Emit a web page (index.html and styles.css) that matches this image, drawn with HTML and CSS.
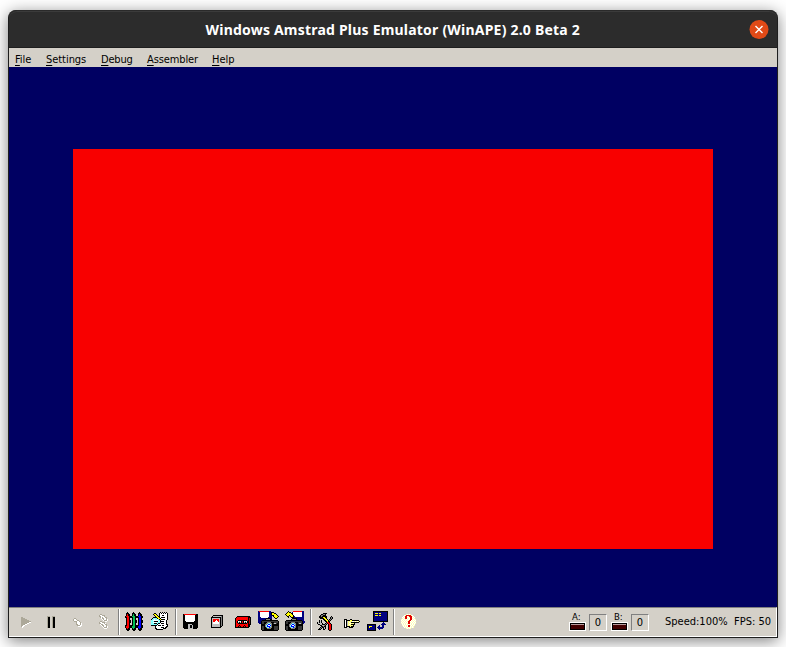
FILE: index.html
```html
<!DOCTYPE html>
<html lang="en">
<head>
<meta charset="utf-8">
<title>Windows Amstrad Plus Emulator (WinAPE) 2.0 Beta 2</title>
<link rel="stylesheet" href="styles.css">
</head>
<body>
<main class="window">
  <header class="titlebar">
    <h1 class="title">Windows Amstrad Plus Emulator (WinAPE) 2.0 Beta 2</h1>
    <button class="close" aria-label="Close"><svg width="19" height="19" viewBox="0 0 19 19"><path d="M6 6l7 7M13 6l-7 7" stroke="#fff" stroke-width="1.4"/></svg></button>
  </header>
  <nav class="menu">
    <span class="item file"><u>F</u>ile</span>
    <span class="item settings"><u>S</u>ettings</span>
    <span class="item debug"><u>D</u>ebug</span>
    <span class="item assembler"><u>A</u>ssembler</span>
    <span class="item help"><u>H</u>elp</span>
  </nav>
  <section class="screen"><div class="paper"></div></section>
  <footer class="toolbar">
    <div class="group">
      <svg class="tool" data-icon="play"></svg><svg class="tool" data-icon="pause"></svg><svg class="tool" data-icon="step"></svg><svg class="tool" data-icon="steps"></svg>
    </div>
    <div class="group">
      <svg class="tool" data-icon="pens"></svg><svg class="tool" data-icon="notes"></svg>
    </div>
    <div class="group">
      <svg class="tool" data-icon="disk"></svg><svg class="tool" data-icon="cart"></svg><svg class="tool" data-icon="tape"></svg><svg class="tool" data-icon="save"></svg><svg class="tool" data-icon="load"></svg>
    </div>
    <div class="group">
      <svg class="tool" data-icon="tools"></svg><svg class="tool" data-icon="hand"></svg><svg class="tool" data-icon="net"></svg>
    </div>
    <div class="group last">
      <svg class="tool" data-icon="help"></svg>
    </div>
    <div class="status">
      <div class="drive"><span class="letter">A:</span><span class="led"></span></div><span class="track">0</span>
      <div class="drive"><span class="letter">B:</span><span class="led"></span></div><span class="track">0</span>
      <span class="speed">Speed:100%</span><span class="fps">FPS: 50</span>
    </div>
  </footer>
</main>
<script src="icons.js"></script>
</body>
</html>
```
FILE: styles.css
```css
*, ::after { box-sizing: border-box; }
body {
  margin: 0;
  width: 786px;
  height: 647px;
  padding: 10px 8px 9px;
  background: #fff;
  overflow: hidden;
  font-family: "DejaVu Sans Condensed", "DejaVu Sans", sans-serif;
  font-size: 11px;
  color: #000;
}
.window {
  width: 770px;
  height: 628px;
  display: flex;
  flex-direction: column;
  border: 1px solid #1e1e1e;
  border-top: 0;
  border-radius: 8px 8px 0 0;
  background: #2c2c2c;
  box-shadow: 0 3px 16px rgba(0, 0, 0, .5);
}
.titlebar {
  height: 38px;
  display: grid;
  grid-template-columns: 1fr auto 1fr;
  align-items: center;
  border-radius: 8px 8px 0 0;
  background: #2c2c2c;
  border-top: 1px solid #2a2a2a;
  border-bottom: 1px solid #1e1e1e;
  box-shadow: inset 0 1px #3b3b3b;
}
.title {
  grid-column: 2;
  margin: 2px 0 0;
  width: 375px;
  font: bold 14px/18px "Noto Sans", "Open Sans", sans-serif;
  letter-spacing: .21px;
  color: #fff;
  white-space: nowrap;
}
.close {
  justify-self: end;
  width: 19px;
  height: 19px;
  margin: 0 9px 0 0;
  padding: 0;
  border: 0;
  border-radius: 50%;
  background: #e14a17;
  transform: translateX(.5px);
}
.close svg { display: block; }
.menu {
  height: 19px;
  display: flex;
  background: #d4d0c8;
  line-height: 24px;
  padding-left: 6px;
}
.item { letter-spacing: -.05px; }
.item u { text-underline-offset: 2px; text-decoration-thickness: 1px; }
.file { width: 31px; }
.settings { width: 55px; }
.debug { width: 46px; letter-spacing: -.2px; }
.assembler { width: 65px; letter-spacing: -.12px; }
.screen {
  height: 540px;
  padding: 82px 64px 58px;
  background: #000062;
}
.paper { height: 400px; background: #f80000; }
.toolbar {
  height: 30px;
  display: flex;
  align-items: center;
  padding-left: 3px;
  background: #d4d0c8;
  border-top: 1px solid #808080;
  border-right: 1px solid #fff;
  border-bottom: 1px solid #fff;
}
.group {
  display: flex;
  flex: none;
  height: 26px;
  padding: 1px 0;
}
.group:not(.last)::after {
  content: "";
  width: 2px;
  margin: -1px 0 -1px 3px;
  border-left: 1px solid #808080;
  border-right: 1px solid #fff;
}
.group:first-child::after { margin-left: 2px; }
.tool { width: 26px; height: 24px; overflow: visible; }
.status { display: flex; align-items: flex-start; margin-left: auto; height: 28px; }
.drive { width: 17px; margin: 2px -1px 0 1px; }
.letter { display: block; height: 12px; padding-left: 3px; font-size: 9.5px; line-height: 13px; }
.led {
  display: block;
  width: 17px;
  height: 9px;
  background: #420000;
  box-shadow: inset 0 0 0 1px #fff, inset 0 0 0 2px #000, inset 0 3px #b89c9c;
}
.track {
  width: 18px;
  height: 17px;
  margin: 6px 3px 0 4px;
  border: 1px solid #fff;
  border-top-color: #808080;
  border-left-color: #808080;
  text-align: center;
  line-height: 15px;
}
.speed { width: 69px; margin: 6px 0 0 13px; line-height: 15px; white-space: nowrap; }
.fps { width: 42px; margin-top: 6px; line-height: 15px; white-space: nowrap; }
```
FILE: icons.js
```js
// Toolbar icons as pixel maps: [x, y, rows], one character per pixel.
const COLORS = {
  k: "#000", w: "#fff", g: "#808080", s: "#aca899", l: "#c0c0c0",
  r: "#f00", m: "#c00000", G: "#00c050", b: "#00f", n: "#000080",
  y: "#ff0", Y: "#ffff80", c: "#80ffff", t: "#383838", p: "#ffffb8", q: "#e00000"
};
// One pen; "x" is replaced with the ink colour.
const PEN = [
  "..k...", ".kkk..", ".kxkk.", ".kxkk.", "kxxxkk", "kkxxkk", ".kxxk.", ".kxxk.", ".kxxkk", ".kxxkk",
  ".kxxkk", ".kxxk.", ".kxxk.", "kkxxkk", "kxxxkk", "kxxxkk", ".kxkk.", ".kkkk.", "..kk.."];
const ICONS = {
  play: [9, 7, [
    "ss........", "ssss......", "ssssss....", "ssssssss..", "ssssssssss", "ssssssssww", "ssssssww..",
    "ssssww....", "ssww......", "sww.......", ".w........"]],
  pause: [9, 6, [
    "sss..sss", "skk..skk", "skk..skk", "skk..skk", "skk..skk", "skk..skk", "skk..skk",
    "skk..skk", "skk..skk", "skk..skk", "skk..skk", "skk..skk"]],
  step: [9, 8, [
    ".ss......", "swws.....", "swwwss...", ".ssswws..", "...swwws.", "...swwwsw", "...sswwsw", "....sssww", ".....www."]],
  steps: [9, 4, [
    ".ss......", "swwsss...", "sswwws...", ".swswwss.", "..wsswws.", "...wswwsw", "....wsssw",
    ".ss...ww.", "swwsss...", "sswwwsw..", ".wsswwss.", "..wsswws.", "...wswwsw", "....wsssw", ".....www."]],
  pens: [5, 2, PEN.map(r => ["r", "G", "b"].map(ink => r.replaceAll("x", ink)).join(""))],
  notes: [5, 2, [
    ".........k.k.k.k..", "...kk...kwkwkwkwk.", "..kyyk..kwwwwwwwk.", "...kyyk.kwwkkwwwk.",
    "....kyykkwwwwwwwk.", "..kkkkyykwkkkkwwk.", ".kcccckyykwwwwwwk.", "kccwccwckykkkkwwk.",
    "ccwwwwwcckwwwwwk..", "ccckkkkwckkkkwwk..", "ccwwwwccckwwwwwk..", "ccckkkckkwkkkwwk..",
    "cccccckwwwwwwwwkk.", "kkkkkkwkkkwkkwwwk.", "....kwwwwwwwwwwkk.", "....kwwwwwkkkwkk..", "....kkwwwwwwkkk...", ".....kkkkkkk......"]],
  disk: [6, 4, [
    "krrrrrrrrrrrrkk", "kkwwwwwwwwwwkkk", "kkwwwwwwwwwwkkk", "kkwwwwwwwwwwkkk", "kkwwwwwwwwwwkkk",
    "kkwwwwwwwwwwkkk", "kkwwwwwwwwwwkkk", "kkkwwwwwwwwkkkk", "kkkkkkkkkkkkkkk", "kkkkkkkkkkkkkkk",
    "kkkkkllllkkkkkk", "kkkkkllkklkkkkk", "kkkkkllkklkkkkk", "kkkkkllkklkkkkk", ".kkkklllllkkkk."]],
  cart: [8, 5, [
    "..kkkkkkkkkk", ".kllllllllgk", "kkkkkkkkkkgk", "kllllllllkgk", "klrrrrrrlkgk",
    "klrrrwrrlkgk", "klrrwwwrlkgk", "klwwwwwwlkgk", "klwwwwwwlkgk", "kllllllllkgk", "kllllllllkgk", "kllllllllkk.", "kkkkkkkkkk.."]],
  tape: [6, 6, [
    "..kkkkkkkkkkkkk.", ".krrrrrrrrrrrkkk", "krrrrrrrrrrrrkmk", "krrrrrrrrrrrrkmk", "krrkkkkkkkkkrkmk",
    "krkwlwkrkwlwkkmk", "krklklkrklklkkmk", "krrkkkkkkkkkrkmk", "krrrrrrrrrrrrkkk",
    "krrrkrrrrkrrrkk.", "krrkrkrrkrkrrkk.", "kkkkkkkkkkkkkk.."]],
  save: [3, 1, [
    "nrrrrrrrrrrnn........", "nnwwwwwwwwwnnkkk.....", "nnwwwwwwwwwnnkyykk...", "nnwwwwwwwwwnnkyyyyk..",
    "nnwwwwwwwwwnnnkkyyyk.", "nnwwwwwwwwwnnn.kyyyyk", "nnnwwwwwwwnnnn..kyyk.", "nnnnnnnnkkkknn...kk..",
    "nnnnnnnkggggkk.......", "nnnnkkkkkkkkkkkkkkkk.", "nnnkttttttttttttttttk", "nnnkttkkkggggkkkttttk",
    ".nnkttkkggccggktlltkk", "...kkkkggcbbcgkkkkkkk", "...kkkkgcbwwbgkkkkkkk", "...kttkgcbbbcgkkttttk",
    "...kttkkgccbggkkttttk", "...kttkkkggggkkkttttk", "...kttkkkkkkkkkkttttk", "....kkkkkkkkkkkkkkkk."]],
  load: [4, 1, [
    "...k....rrrrrrrrrnn.", "..kykk.nwwwwwwwwwnn.", ".kyyyykkwwwwwwwwwnn.", "kyyyyyykwwwwwwwwwnn.",
    ".kyykyyykwwwwwwwwnn.", "..kk.kyyknwwwwwwwnn.", "...k..kkknnnnnnnnnn.", ".......kkkkknnnnnnn.",
    "......kggggknnnnnnn.", ".kkkkkkkkkkkkkkkknn.", "kttttttttttttttttknn", "kttkkkggggkkkttttknn",
    "kttkkggccggkktlltkn.", "kkkkggcbbcgkkkkkkk..", "kkkkgcbwwbgkkkkkkk..", "kttkgcbbbcgkkttttk..",
    "kttkkgccbggkkttttk..", "kttkkkggggkkkttttk..", "kttkkkkkkkkkkttttk..", ".kkkkkkkkkkkkkkkk..."]],
  tools: [5, 3, [
    "......kkkk.......", "....kkggk........", "...kggkkk........", "..kkgkkkkk....k..", "..kkkkyykk...kgk.",
    "...kkkkyyk...kgk.", "......kkyyk.kgk..", "..k.k..kkyykgk...", "..klk...kkykk....", "klklk....krrk....",
    "kllllk..kgkrrk...", ".kkllkkkgk.krrk..", "...kkllgk..krrk..", "....kkgkk..krrk..",
    "...kgkklk..krrk..", "..kgk.klk..krrk..", ".kkk..kk...krrk..", "............kk..."]],
  hand: [6, 9, [
    "kkk...kk........", "kwkkkkYykkkkkkk.", "kwklYYYYwwYwYwYk", "kwklYwYkkkkkkkk.", "kwklYYwYYYk.....",
    "kwklYwYkkkk.....", "kwklYYYYYk......", "kwkkkkYkkk......", "kkk..kkkk......."]],
  net: [3, 1, [
    "......kkkkkkkkkkkkkkk", "......knnnnnnnnnnnnnk", "......knyyynyynnnnnnk", "......knnnnnnnnnnnnnk",
    "......knyyynyynnnnnnk", "......knnnnnnnnnnnnnk", "......knnnnnnnnnnnnnk", "......knnnnnnnnnnnnnk",
    "......knnnnnnnnnnnnnk", "......knnnnnnnnnnnnnk", "......kkkkkkkkkkkkkkk", "................n....",
    "...............nnn...", "kkkkkkkkk.....nnnnn..", "knnnnnnnk...n..nn....", "knyyynnnk..nn..nn....",
    "knynnnnnk.nnnnnnn....", "knnnnnnnk..nnnnn.....", "knnnnnnnk...n........", "kkkkkkkkk............"]],
  help: [6, 4, [
    ".....pwpwp.....", "...wpqqqqqpw...", "..wpqqwpqqqpw..", ".wpwqqpwpqqwpw.", ".pwpqqwpwqqpwp.",
    "pwpwpwpwpqqwpwp", "wpwpwpwpqqwpwpw", "pwpwpwpqqwpwpwp", "wpwpwpwqqpwpwpw", "pwpwpwpqqwpwpwp",
    ".wpwpwpwpwpwpw.", ".pwpwpwqqpwpwp.", "..wpwpwqqwpwp..", "...wpwpwpwpwp..", ".....pwpwp....."]]
};
for (const svg of document.querySelectorAll("[data-icon]")) {
  const [x0, y0, rows] = ICONS[svg.dataset.icon];
  svg.setAttribute("viewBox", "0 0 26 24");
  svg.setAttribute("shape-rendering", "crispEdges");
  const paths = {};
  rows.forEach((row, y) => [...row].forEach((c, x) => {
    if (c !== ".") paths[c] = (paths[c] || "") + `M${x0 + x} ${y0 + y}h1v1h-1z`;
  }));
  for (const c in paths) {
    const p = document.createElementNS("http://www.w3.org/2000/svg", "path");
    p.setAttribute("fill", COLORS[c]);
    p.setAttribute("d", paths[c]);
    svg.append(p);
  }
}
```
